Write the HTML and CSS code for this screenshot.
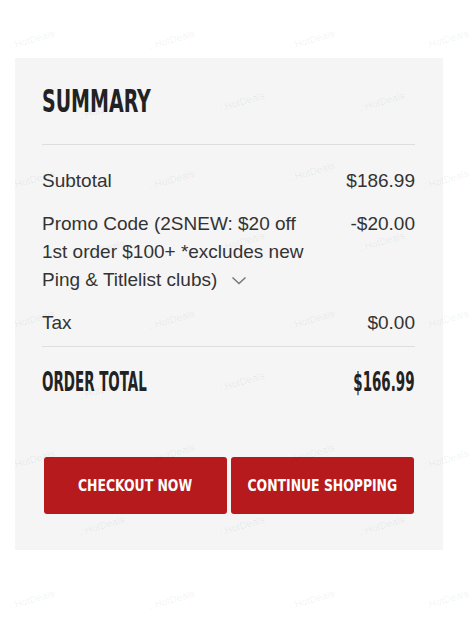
FILE: index.html
```html
<!DOCTYPE html>
<html lang="en">
<head>
<meta charset="utf-8">
<title>Summary</title>
<link rel="stylesheet" href="styles.css">
</head>
<body>
<div class="page">
  <section class="panel">
    <h2 class="title"><span class="squeeze">SUMMARY</span></h2>
    <div class="rows">
      <div class="row">
        <span class="label">Subtotal</span>
        <span class="value">$186.99</span>
      </div>
      <div class="row">
        <span class="label promo">Promo Code (2SNEW: $20 off 1st order $100+ *excludes new Ping &amp; Titlelist clubs)<svg class="chev" width="16" height="9" viewBox="0 0 16 9"><path d="M1.5 1.5 L8 7.5 L14.5 1.5" fill="none" stroke="#777" stroke-width="1.5"/></svg></span>
        <span class="value">-$20.00</span>
      </div>
      <div class="row">
        <span class="label">Tax</span>
        <span class="value">$0.00</span>
      </div>
    </div>
    <div class="total">
      <span class="squeeze-sm">ORDER TOTAL</span>
      <span class="squeeze-sm right">$166.99</span>
    </div>
    <div class="actions">
      <button class="btn"><span class="btn-text">CHECKOUT NOW</span></button>
      <button class="btn"><span class="btn-text">CONTINUE SHOPPING</span></button>
    </div>
  </section>
</div>
<div class="marks">
  <span class="mark" style="left:8px;top:34px">⌂HotDeals</span>
  <span class="mark" style="left:148px;top:34px">⌂HotDeals</span>
  <span class="mark" style="left:288px;top:34px">⌂HotDeals</span>
  <span class="mark" style="left:422px;top:34px">⌂HotDeals</span>
  <span class="mark" style="left:78px;top:104px">⌂HotDeals</span>
  <span class="mark" style="left:218px;top:96px">⌂HotDeals</span>
  <span class="mark" style="left:358px;top:96px">⌂HotDeals</span>
  <span class="mark" style="left:8px;top:174px">⌂HotDeals</span>
  <span class="mark" style="left:148px;top:174px">⌂HotDeals</span>
  <span class="mark" style="left:288px;top:166px">⌂HotDeals</span>
  <span class="mark" style="left:422px;top:174px">⌂HotDeals</span>
  <span class="mark" style="left:78px;top:244px">⌂HotDeals</span>
  <span class="mark" style="left:218px;top:236px">⌂HotDeals</span>
  <span class="mark" style="left:358px;top:236px">⌂HotDeals</span>
  <span class="mark" style="left:8px;top:314px">⌂HotDeals</span>
  <span class="mark" style="left:148px;top:314px">⌂HotDeals</span>
  <span class="mark" style="left:288px;top:314px">⌂HotDeals</span>
  <span class="mark" style="left:422px;top:314px">⌂HotDeals</span>
  <span class="mark" style="left:78px;top:384px">⌂HotDeals</span>
  <span class="mark" style="left:218px;top:376px">⌂HotDeals</span>
  <span class="mark" style="left:8px;top:454px">⌂HotDeals</span>
  <span class="mark" style="left:148px;top:448px">⌂HotDeals</span>
  <span class="mark" style="left:288px;top:448px">⌂HotDeals</span>
  <span class="mark" style="left:422px;top:454px">⌂HotDeals</span>
  <span class="mark" style="left:78px;top:520px">⌂HotDeals</span>
  <span class="mark" style="left:218px;top:520px">⌂HotDeals</span>
  <span class="mark" style="left:358px;top:520px">⌂HotDeals</span>
  <span class="mark" style="left:8px;top:594px">⌂HotDeals</span>
  <span class="mark" style="left:148px;top:594px">⌂HotDeals</span>
  <span class="mark" style="left:288px;top:594px">⌂HotDeals</span>
  <span class="mark" style="left:422px;top:594px">⌂HotDeals</span>
</div>
</body>
</html>
```

FILE: styles.css
```css
html, body {
  margin: 0;
  padding: 0;
  background: #ffffff;
}
body {
  font-family: "Liberation Sans", Arial, sans-serif;
  color: #333333;
  width: 474px;
  height: 625px;
  overflow: hidden;
  position: relative;
}
.page {
  padding: 58px 31px 0 15px;
}
.panel {
  background: #f5f5f5;
  padding: 23px 28px 36px 27px;
}
.title {
  margin: 0 0 23px 0;
  height: 40px;
  line-height: 40px;
  font-family: "DejaVu Sans Condensed", "DejaVu Sans", sans-serif;
  font-weight: bold;
  font-size: 32px;
  color: #222222;
}
.squeeze {
  display: inline-block;
  transform: scaleX(0.66);
  transform-origin: left center;
  white-space: nowrap;
}
.squeeze-sm {
  display: inline-block;
  transform: scaleX(0.575);
  transform-origin: left center;
  white-space: nowrap;
}
.squeeze-sm.right {
  transform-origin: right center;
}
.rows {
  border-top: 1px solid #dedede;
  border-bottom: 1px solid #dedede;
  padding: 22px 0 9px 0;
  display: flex;
  flex-direction: column;
  gap: 15px;
}
.row {
  display: flex;
  justify-content: space-between;
  align-items: flex-start;
  font-size: 19px;
  line-height: 28px;
}
.label.promo {
  width: 275px;
}
.chev {
  margin-left: 14px;
  vertical-align: 1px;
}
.value {
  white-space: nowrap;
}
.total {
  display: flex;
  justify-content: space-between;
  margin-top: 21px;
  height: 28px;
  line-height: 28px;
  font-family: "DejaVu Sans Condensed", "DejaVu Sans", sans-serif;
  font-weight: bold;
  font-size: 26px;
  color: #222222;
}
.actions {
  margin-top: 61px;
  padding: 0 1px 0 2px;
  display: flex;
  gap: 4px;
}
.btn {
  flex: 1;
  height: 57px;
  border: 0;
  border-radius: 3px;
  background: #b71a1c;
  color: #ffffff;
  padding: 0;
  font-family: "DejaVu Sans Condensed", "DejaVu Sans", sans-serif;
  font-weight: bold;
  font-size: 15px;
  display: flex;
  align-items: center;
  justify-content: center;
}
.btn-text {
  display: inline-block;
  transform: scaleX(0.92);
  white-space: nowrap;
}
.marks {
  position: absolute;
  left: 0;
  top: 0;
  width: 474px;
  height: 625px;
  pointer-events: none;
}
.mark {
  position: absolute;
  font-family: "Liberation Sans", Arial, sans-serif;
  font-size: 10px;
  color: rgba(0, 0, 0, 0.07);
  transform: rotate(-16deg);
  white-space: nowrap;
}
```
